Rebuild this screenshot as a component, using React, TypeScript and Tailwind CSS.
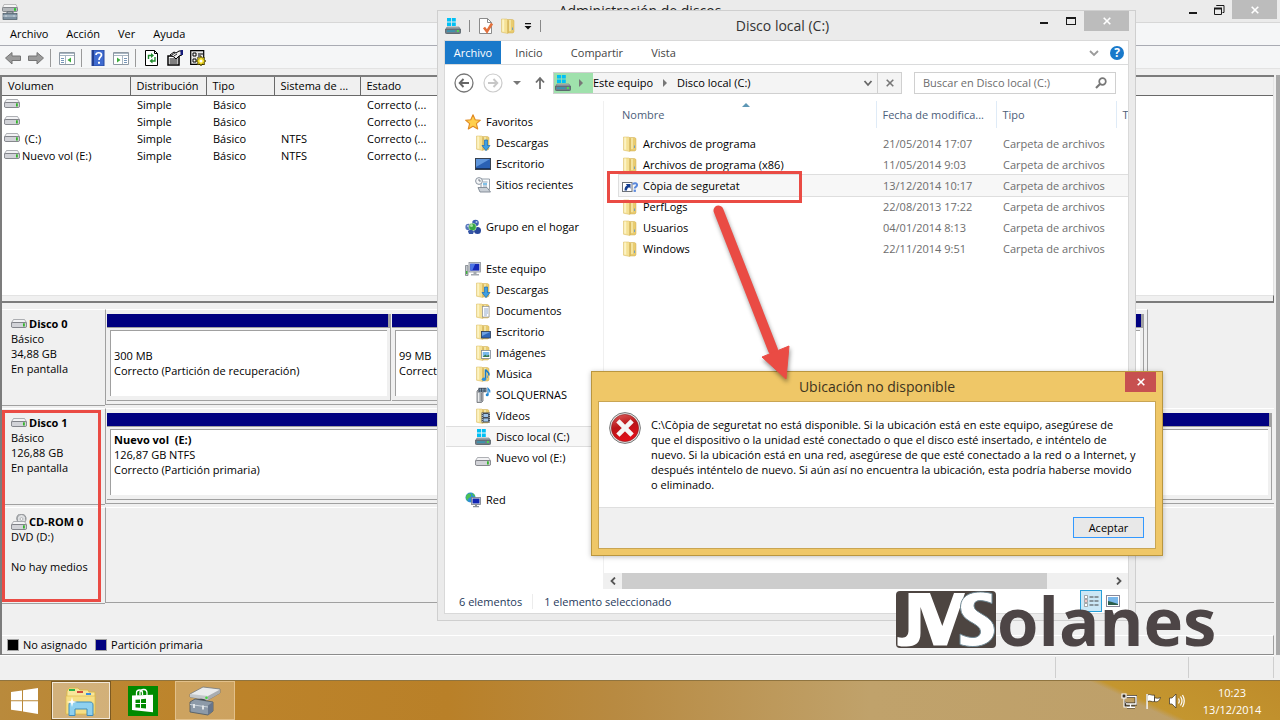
import { useState } from 'react';
import type { ReactNode } from 'react';

interface Volume {
  id: number;
  name: string;
  layout: string;
  type: string;
  fs: string;
  status: string;
}

interface NavEntry {
  label: string;
  icon: string;
  level: 0 | 1;
}

interface FileEntry {
  name: string;
  date: string;
  type: string;
  icon: string;
}

const volumes: Volume[] = [
  { id: 1, name: '', layout: 'Simple', type: 'Básico', fs: '', status: 'Correcto (...' },
  { id: 2, name: '', layout: 'Simple', type: 'Básico', fs: '', status: 'Correcto (...' },
  { id: 3, name: ' (C:)', layout: 'Simple', type: 'Básico', fs: 'NTFS', status: 'Correcto (...' },
  { id: 4, name: 'Nuevo vol (E:)', layout: 'Simple', type: 'Básico', fs: 'NTFS', status: 'Correcto (...' },
];

const navGroups: NavEntry[][] = [
  [
    { label: 'Favoritos', icon: 'star', level: 0 },
    { label: 'Descargas', icon: 'downloads', level: 1 },
    { label: 'Escritorio', icon: 'desktop', level: 1 },
    { label: 'Sitios recientes', icon: 'recent', level: 1 },
  ],
  [{ label: 'Grupo en el hogar', icon: 'homegroup', level: 0 }],
  [
    { label: 'Este equipo', icon: 'computer', level: 0 },
    { label: 'Descargas', icon: 'downloads', level: 1 },
    { label: 'Documentos', icon: 'documents', level: 1 },
    { label: 'Escritorio', icon: 'desktopFolder', level: 1 },
    { label: 'Imágenes', icon: 'pictures', level: 1 },
    { label: 'Música', icon: 'music', level: 1 },
    { label: 'SOLQUERNAS', icon: 'server', level: 1 },
    { label: 'Vídeos', icon: 'videos', level: 1 },
    { label: 'Disco local (C:)', icon: 'systemDrive', level: 1 },
    { label: 'Nuevo vol (E:)', icon: 'drive', level: 1 },
  ],
  [{ label: 'Red', icon: 'network', level: 0 }],
];

const files: FileEntry[] = [
  { name: 'Archivos de programa', date: '21/05/2014 17:07', type: 'Carpeta de archivos', icon: 'folder' },
  { name: 'Archivos de programa (x86)', date: '11/05/2014 9:03', type: 'Carpeta de archivos', icon: 'folder' },
  { name: 'Còpia de seguretat', date: '13/12/2014 10:17', type: 'Carpeta de archivos', icon: 'shortcut' },
  { name: 'PerfLogs', date: '22/08/2013 17:22', type: 'Carpeta de archivos', icon: 'folder' },
  { name: 'Usuarios', date: '04/01/2014 8:13', type: 'Carpeta de archivos', icon: 'folder' },
  { name: 'Windows', date: '22/11/2014 9:51', type: 'Carpeta de archivos', icon: 'folder' },
];

const folderShape = (
  <>
    <path d="M7 1.500h5.500l1.500 1V14l-1 1H7z" fill="#e9cc70" stroke="#d0ad50" strokeWidth="0.5" />
    <path d="M9 2h2v11H9z" fill="#f3e3a0" />
    <path d="M1.500 1h5l1.300 1V15.500l-6.300-1.300z" fill="#f5e195" stroke="#d8b95c" strokeWidth="0.5" />
    <path d="M2.200 1.600h2v12.200l-2-.4z" fill="#fcf3c4" />
    <path d="M8 2.500v12.500" stroke="#c4a246" strokeWidth="0.600" />
    <path d="M12.500 9.500v2.500" stroke="#6f9fc4" strokeWidth="1" />
  </>
);

const windowsFlag = <path d="M2 0h4v3.600H2zM6.800 0h4v3.600h-4zM2 4.400h4V8H2zM6.800 4.400h4V8h-4z" fill="#00c0f5" />;

const driveShape = (
  <>
    <path d="M2.500 5.500h11l2.200 3.500H.3z" fill="#f2f2f4" stroke="#8e9096" strokeWidth="0.7" />
    <rect x="0.400" y="8.500" width="15.200" height="5" rx="1.400" fill="#d2d3d8" stroke="#6c6e75" strokeWidth="0.8" />
    <rect x="12" y="9.300" width="1.800" height="3.200" fill="#35b32c" />
  </>
);

const iconArt: Record<string, ReactNode> = {
  folder: folderShape,
  downloads: (
    <>
      {folderShape}
      <path d="M9.500 5h3v5.500H15L11 15.700 7 10.500h2.500z" fill="#3d9fe2" stroke="#1b6cb5" strokeWidth="0.7" />
    </>
  ),
  documents: (
    <>
      {folderShape}
      <rect x="7.500" y="3.500" width="6.500" height="10.500" fill="#fff" stroke="#8a8f98" strokeWidth="0.700" />
      <path d="M9 6h4M9 8h4M9 10h4M9 12h3" stroke="#7693bb" strokeWidth="0.800" />
    </>
  ),
  desktopFolder: (
    <>
      {folderShape}
      <rect x="6.500" y="7.500" width="9" height="6.500" fill="#2f67b8" stroke="#2b3b55" strokeWidth="0.800" />
      <path d="M7 8h8L7 12z" fill="#6ea0e0" />
    </>
  ),
  pictures: (
    <>
      {folderShape}
      <rect x="6.500" y="5.500" width="9" height="8" fill="#fff" stroke="#7f8a96" strokeWidth="0.800" />
      <path d="M7.700 7h6.500v5H7.700z" fill="#78b9ec" />
      <path d="M7.700 12l2.500-2.500 1.500 1.300 2.500-1V12z" fill="#397b4f" />
    </>
  ),
  music: (
    <>
      {folderShape}
      <path d="M10.500 13V3.500c1 2 4 2 3.500 6" fill="none" stroke="#1779c9" strokeWidth="1.500" />
      <ellipse cx="9" cy="13.200" rx="2.200" ry="1.800" fill="#2a8fdd" />
    </>
  ),
  videos: (
    <>
      {folderShape}
      <rect x="6.500" y="4.500" width="8.500" height="10" fill="#424a55" />
      <path d="M8.500 6h4.500v3H8.500zM8.500 10.500h4.500v3H8.500z" fill="#9dc3e8" />
      <path d="M7.300 5v9.500M14.200 5v9.500" stroke="#e2e6ea" strokeWidth="0.800" strokeDasharray="1 1" />
    </>
  ),
  star: (
    <path d="M8 .8l2.200 4.900 5.200.5-4 3.500 1.300 5.300L8 12.200 3.300 15l1.300-5.300-4-3.500 5.200-.5z" fill="#ffcf4b" stroke="#e08a23" strokeWidth="1.100" strokeLinejoin="round" />
  ),
  desktop: (
    <>
      <rect x="0.500" y="2.500" width="15" height="11" fill="#2a61b4" stroke="#39424f" />
      <path d="M1 3h14L1 11z" fill="#5f96dc" />
      <path d="M1 12.500h14" stroke="#16335f" />
    </>
  ),
  recent: (
    <>
      <path d="M6 2h8.500v10.500H6z" fill="#fafcfe" stroke="#8b95a0" strokeWidth="0.900" />
      <path d="M3 10.500h9l3.500 4.500H5z" fill="#c9cfd6" stroke="#7d8792" strokeWidth="0.900" />
      <path d="M8 5h4.500M8 9h4" stroke="#8fa3b5" />
      <path d="M8 7h4" stroke="#3fa0dc" strokeWidth="1.300" />
      <circle cx="4" cy="4" r="3.400" fill="#f4f6f8" stroke="#8b95a0" />
      <path d="M4 2v2h1.800" fill="none" stroke="#5a636d" strokeWidth="0.800" />
    </>
  ),
  homegroup: (
    <>
      <circle cx="10.500" cy="4" r="3.300" fill="#3a5fb0" />
      <circle cx="3.600" cy="8" r="3.200" fill="#5877bd" />
      <circle cx="12.500" cy="11.500" r="3.500" fill="#28479b" />
      <circle cx="7.500" cy="8" r="3.800" fill="#37a844" stroke="#d2edc9" strokeWidth="0.600" />
      <circle cx="6.500" cy="6.600" r="1.500" fill="#a6e2a0" />
      <path d="M3 12.500c0-2 5-2 6 0l-1 2.500H4z" fill="#3656a6" />
      <circle cx="2.900" cy="7" r="1" fill="#bccaec" />
      <circle cx="11.500" cy="3" r="1" fill="#bccaec" />
    </>
  ),
  computer: (
    <>
      <path d="M.5 4.500h2.500v10H.5z" fill="#c3c7cc" stroke="#6e757d" strokeWidth="0.700" />
      <rect x="1" y="10" width="1.400" height="3" fill="#42b43c" />
      <rect x="4" y="1.500" width="11.500" height="9.500" fill="#d8dbe0" stroke="#8a9098" strokeWidth="0.800" />
      <rect x="5.300" y="2.800" width="9" height="6.800" fill="#1428b8" />
      <path d="M5.300 2.800h5l-3 6.800h-2z" fill="#4b74e6" />
      <path d="M8.500 11h3v2h2.500v1.500H6V13h2.500z" fill="#a4a9b0" />
    </>
  ),
  server: (
    <>
      <path d="M2 4l1.500-1.500H8V14l-1.500 1.500H2z" fill="#b9bcc0" stroke="#6c7075" strokeWidth="0.800" />
      <path d="M3.500 6v8.500" stroke="#eceeef" strokeWidth="1.200" />
      <path d="M6.300 6v8.500" stroke="#7f8489" strokeWidth="1.200" />
      <path d="M3.500.8h8v4.400h-8z" fill="#394350" />
      <path d="M4.500 2.200h1.700M7 2.200h1.700M9.500 2.200h1.200M4.500 4h1.700M7 4h1.700M9.500 4h1.200" stroke="#9cc4e0" />
      <path d="M13 7.500V1.500c1 1 2.300 1.500 1.800 4" fill="none" stroke="#1f86d2" strokeWidth="1.200" />
      <circle cx="12.200" cy="7.700" r="1.500" fill="#1f86d2" />
    </>
  ),
  systemDrive: (
    <>
      {windowsFlag}
      <path d="M2 9h12l1.500 2.500H.5z" fill="#aeb4ba" stroke="#6e757d" strokeWidth="0.600" />
      <rect x="0.400" y="11" width="15.200" height="4.500" rx="1" fill="#6f7f8b" stroke="#4f5960" strokeWidth="0.800" />
      <rect x="2" y="12.200" width="8" height="1.800" fill="#3d93ad" />
      <rect x="12" y="12" width="1.800" height="2" fill="#4be04a" />
    </>
  ),
  drive: <g transform="translate(0 2)">{driveShape}</g>,
  network: (
    <>
      <circle cx="5.500" cy="5.500" r="5" fill="#2c8fd4" />
      <path d="M2 2.500c3-2 5-.5 4 1.500s-4 2-3 5C1 8 .3 4.500 2 2.500zM7 1c2 .5 3 2 3.200 3.500L8 4z" fill="#4cc052" />
      <rect x="6.500" y="5.500" width="9" height="7" fill="#cfd4da" stroke="#757d87" strokeWidth="0.800" />
      <rect x="7.600" y="6.600" width="6.800" height="4.800" fill="#1226b4" />
      <path d="M10 12.500h2v1.500h2v1.300H8V14h2z" fill="#8a9199" />
    </>
  ),
  shortcut: (
    <>
      <rect x="0.500" y="4.500" width="9.500" height="9" fill="#fff" stroke="#6c7178" />
      <path d="M2.500 12.500c0-3 .8-4.300 2.500-5L3.800 6H8.500v4.700L7.200 9.300c-1.500.5-2.200 1.500-2.200 3.200z" fill="#153d8f" />
      <path d="M11 6.500c.5-2 4.500-1.800 4 .8-.3 1.700-2.300 1.500-2.300 3.200" fill="none" stroke="#5a88dc" strokeWidth="2" />
      <rect x="11.600" y="11.600" width="2.300" height="2.300" fill="#5a88dc" />
    </>
  ),
};

function Icon({ name }: { name: string }) {
  return (
    <svg className="h-4 w-4 shrink-0" viewBox="0 0 16 16" aria-hidden="true">
      {iconArt[name]}
    </svg>
  );
}

function DiskIcon() {
  return (
    <svg className="h-4 w-4 shrink-0" viewBox="0 0 16 16" aria-hidden="true">
      <g transform="translate(0 -2)">{driveShape}</g>
    </svg>
  );
}

function CloseGlyph() {
  return (
    <svg className="h-2 w-2" viewBox="0 0 8 8" aria-hidden="true">
      <path d="M.7.7l6.600 6.600M7.300.7L.7 7.300" stroke="currentColor" strokeWidth="1.600" />
    </svg>
  );
}

function Crumb() {
  return (
    <svg className="h-2 w-1" viewBox="0 0 4 8" aria-hidden="true">
      <path d="M0 0l4 4-4 4z" fill="#777" />
    </svg>
  );
}

function ToolbarButton({ label, children }: { label: string; children: ReactNode }) {
  return (
    <button aria-label={label} className="flex h-[18px] w-[18px] items-center justify-center">
      <svg className="h-4 w-4" viewBox="0 0 16 16" aria-hidden="true">
        {children}
      </svg>
    </button>
  );
}

interface PartitionProps {
  className: string;
  name?: string;
  size: string;
  status: string;
}

// the name line keeps its height even when the partition has no name
function Partition({ className, name = '', size, status }: PartitionProps) {
  return (
    <div className={`flex flex-col border-r border-b border-[#a0a0a0] ${className}`}>
      <div className="h-[14px] shrink-0 border-r-2 border-b border-[#a0a0a0] bg-[#000080]" />
      <div className="mx-[3px] mt-0.5 mb-1 flex-1 overflow-hidden border-t border-l border-[#a0a0a0] bg-white pt-0.5 pl-[3px] whitespace-nowrap">
        <p className="h-[15px] font-bold whitespace-pre">{name}</p>
        <p>{size}</p>
        <p>{status}</p>
      </div>
    </div>
  );
}

interface DiskRowProps {
  title: string;
  lines: string[];
  icon: ReactNode;
  areaClass?: string;
  children?: ReactNode;
}

function DiskRow({ title, lines, icon, areaClass = '', children }: DiskRowProps) {
  return (
    <div className="flex h-[99px]">
      <div className="mb-0.5 w-[103px] shrink-0 border-t border-b border-t-white border-b-[#a0a0a0] pt-1.5 pl-[9px]">
        <div className="flex h-[15px] items-center gap-0.5">
          {icon}
          <span className="font-bold whitespace-nowrap">{title}</span>
        </div>
        {lines.map((line, i) => (
          <div key={i} className="h-[15px] whitespace-nowrap">{line}</div>
        ))}
      </div>
      <div className={`mb-[3px] flex min-w-0 flex-1 border-t border-b border-l border-t-white border-b-[#a0a0a0] border-l-[#a0a0a0] pt-1 pb-[3px] pl-px ${areaClass}`}>
        {children}
      </div>
    </div>
  );
}

function DiskManager() {
  return (
    <section className="flex flex-1 flex-col bg-[#f0f0f0]">
      <header className="relative flex h-[23px] shrink-0 items-start justify-between overflow-hidden border-b border-[#d7d7d7] bg-[#ebebeb]">
        <svg className="mt-1 ml-0.5 h-4 w-4" viewBox="0 0 16 16" aria-hidden="true">
          <path d="M2 .5h12l1.500 3.500H.5z" fill="#f5f5f5" stroke="#999" strokeWidth="0.600" />
          <rect x="0.500" y="3.500" width="15" height="4" rx="1" fill="#b3b7ba" stroke="#666b70" strokeWidth="0.700" />
          <rect x="12" y="4.200" width="2" height="2.500" fill="#27c92d" />
          <path d="M5 9.500V8h6v1.500" fill="none" stroke="#52616d" />
          <rect x="1" y="9.500" width="14" height="6" fill="#7d91a1" stroke="#485662" strokeWidth="0.700" />
          <path d="M1 12h14M4 11v2M12 11v2" stroke="#d4dee6" strokeWidth="0.800" />
        </svg>
        <h1 className="absolute top-0 left-1/2 -translate-x-1/2 text-[14px] leading-[22px] whitespace-nowrap text-[#222]">Administración de discos</h1>
        <div className="flex text-[#1a1a1a]">
          <button aria-label="Minimizar" className="flex h-[19px] w-[26px] items-center justify-center pt-1.5">
            <span className="h-0.5 w-2 bg-current" />
          </button>
          <button aria-label="Restaurar" className="flex h-[19px] w-[26px] items-center justify-center">
            <svg className="h-3 w-3" viewBox="0 0 12 12" aria-hidden="true">
              <path d="M3.500 2V1.500h7.500v7H9.500M1.500 4.500h7v6h-7z" fill="none" stroke="currentColor" />
              <path d="M1 4.500h8" stroke="currentColor" strokeWidth="2" />
            </svg>
          </button>
          <button aria-label="Cerrar" className="mr-[3px] flex h-[19px] w-[45px] items-center justify-center bg-[#bcbcbc] text-white">
            <CloseGlyph />
          </button>
        </div>
      </header>

      <nav className="flex h-[23px] shrink-0 items-center gap-[18px] border-b border-[#a9abb3] bg-[#f5f6f7] pb-0.5 pl-2.5">
        <button>Archivo</button>
        <button>Acción</button>
        <button>Ver</button>
        <button>Ayuda</button>
      </nav>

      <div className="flex h-[23px] shrink-0 items-center gap-[5px] border-b border-[#e3e3e3] bg-[#f5f6f7] pt-px pl-1">
        <ToolbarButton label="Atrás">
          <path d="M.5 8L7 2.500V6h8.500v4.500H7V14z" fill="#9b9b9b" stroke="#757575" />
        </ToolbarButton>
        <ToolbarButton label="Adelante">
          <path d="M15.500 8L9 2.500V6H.5v4.500H9V14z" fill="#9b9b9b" stroke="#757575" />
        </ToolbarButton>
        <span className="mr-0.5 h-[18px] w-px bg-[#9a9a9a]" />
        <ToolbarButton label="Mostrar árbol">
          <path d="M.5 2.500h15v12H.5z" fill="#fff" stroke="#8f99a3" />
          <path d="M1 3.500h14M1 5.500h14M6.500 6v8" stroke="#a8b6c3" />
          <path d="M2 8.500h3M2 10.500h3M2 12.500h3" stroke="#7796b8" />
          <path d="M12 7.500v5L8.500 10z" fill="#3bab3a" />
        </ToolbarButton>
        <span className="mr-0.5 h-[18px] w-px bg-[#9a9a9a]" />
        <ToolbarButton label="Ayuda">
          <path d="M2 0h12v16H2z" fill="#3f6bd0" stroke="#2748a0" />
          <path d="M2 0h2v16H2z" fill="#223f91" />
          <path d="M6 5c0-3 5.500-3 5.500 0C11.500 7 9 7 9 10" fill="none" stroke="#fff" strokeWidth="1.700" />
          <path d="M8 11.700h2v2H8z" fill="#fff" />
        </ToolbarButton>
        <ToolbarButton label="Panel de acciones">
          <path d="M.5 2.500h15v12H.5z" fill="#fff" stroke="#8f99a3" />
          <path d="M1 3.500h14M1 5.500h14M9.500 6v8" stroke="#a8b6c3" />
          <path d="M11 8.500h3M11 10.500h3M11 12.500h3" stroke="#7796b8" />
          <path d="M4 7.500v5L7.500 10z" fill="#3bab3a" />
        </ToolbarButton>
        <span className="mr-0.5 h-[18px] w-px bg-[#9a9a9a]" />
        <ToolbarButton label="Actualizar">
          <path d="M1.500.5h9l3 3v12h-12z" fill="#fff" stroke="#000" />
          <path d="M10.500.5v3h3" fill="none" stroke="#000" />
          <path d="M4.500 9V5.500H8M11 7v4H7.500" fill="none" stroke="#1f8b2d" strokeWidth="1.400" />
          <path d="M7 3l3 2.500L7 8zM8.500 8.500L5.500 11l3 2.500z" fill="#1f8b2d" />
        </ToolbarButton>
        <ToolbarButton label="Propiedades">
          <path d="M1 6h11v9H1z" fill="#fff" stroke="#000" strokeWidth="1.500" />
          <path d="M2.500 9h8M2.500 11h8M2.500 13h8" stroke="#000" />
          <path d="M3 5l4-3 2 1 3-2h3v4l-3 1-3 3-2-2z" fill="#eee" stroke="#000" />
          <path d="M5 5l3-2M7 6l3-2" stroke="#000" strokeWidth="0.800" />
          <path d="M13.500 0H16v5h-2.500z" fill="#161d7c" />
        </ToolbarButton>
        <ToolbarButton label="Configuración">
          <path d="M.7.7h13v13.600H.7z" fill="#e7e7e7" stroke="#000" strokeWidth="1.200" />
          <path d="M3 3h3v3H3zM3 9h3v3H3z" fill="#fff" stroke="#000" />
          <path d="M8 4h5M8 6h3" stroke="#000" />
          <path d="M11 6l1 2 2.500-.5-.5 2.500 2 1-2 1 .5 2.500L12 14l-1 2-1-2-2.500.5L8 12l-2-1 2-1-.5-2.500L10 8z" fill="#f3dc25" stroke="#4b4300" strokeWidth="0.800" />
          <circle cx="11" cy="11" r="1.500" fill="#fff" />
        </ToolbarButton>
      </div>

      <div className="mt-1.5 flex flex-1 border-r-4 border-[#a9a9a9]">
        <div className="mr-0.5 flex min-w-0 flex-1 flex-col border-t-2 border-l-2 border-[#7c7c7c]">
          <div className="h-[218px] shrink-0 overflow-hidden border-r border-[#e3e3e3] bg-white">
            <table className="w-full table-fixed border-collapse text-left">
              <colgroup>
                <col className="w-[128px]" />
                <col className="w-[76px]" />
                <col className="w-[68px]" />
                <col className="w-[86px]" />
                <col />
              </colgroup>
              <thead>
                <tr className="h-[18px] border-b border-[#696969] bg-[#f0f0f0]">
                  <th className="border-r border-[#696969] p-0 pl-1.5 font-normal">Volumen</th>
                  <th className="border-r border-[#696969] p-0 pl-1.5 font-normal">Distribución</th>
                  <th className="border-r border-[#696969] p-0 pl-1.5 font-normal">Tipo</th>
                  <th className="border-r border-[#696969] p-0 pl-1.5 font-normal">Sistema de ...</th>
                  <th className="p-0 pl-1.5 font-normal">Estado</th>
                </tr>
              </thead>
              <tbody>
                {volumes.map((volume) => (
                  <tr key={volume.id} className="h-[17px]">
                    <td className="p-0 pl-0.5">
                      <span className="flex h-[17px] items-center gap-0.5 whitespace-pre">
                        <DiskIcon />
                        {volume.name}
                      </span>
                    </td>
                    <td className="p-0 pl-[7px]">{volume.layout}</td>
                    <td className="p-0 pl-[7px]">{volume.type}</td>
                    <td className="p-0 pl-[7px]">{volume.fs}</td>
                    <td className="p-0 pl-[7px]">{volume.status}</td>
                  </tr>
                ))}
              </tbody>
            </table>
          </div>
          <div className="h-2 shrink-0 border-t border-r border-b-2 border-t-[#e3e3e3] border-r-[#696969] border-b-[#7c7c7c]" />

          <div className="min-h-[326px] flex-1 pt-1.5">
            <DiskRow
              title="Disco 0"
              lines={['Básico', '34,88 GB', 'En pantalla']}
              icon={<DiskIcon />}
              areaClass="mr-[126px] border-r border-r-[#a0a0a0]"
            >
              <Partition className="w-[284px] shrink-0" size="300 MB" status="Correcto (Partición de recuperación)" />
              <Partition className="mr-[3px] ml-px flex-1" size="99 MB" status="Correcto (Sistema)" />
            </DiskRow>
            <DiskRow title="Disco 1" lines={['Básico', '126,88 GB', 'En pantalla']} icon={<DiskIcon />}>
              <Partition
                className="mr-0.5 flex-1"
                name="Nuevo vol  (E:)"
                size="126,87 GB NTFS"
                status="Correcto (Partición primaria)"
              />
            </DiskRow>
            <DiskRow
              title="CD-ROM 0"
              lines={['DVD (D:)', '', 'No hay medios']}
              icon={
                <svg className="h-4 w-4 shrink-0" viewBox="0 0 16 16" aria-hidden="true">
                  <circle cx="10.500" cy="5" r="4.500" fill="#dfe1e3" stroke="#8c8f93" />
                  <circle cx="10.500" cy="5" r="1.400" fill="#fff" stroke="#9b9ea2" strokeWidth="0.700" />
                  <g transform="translate(0 2)">{driveShape}</g>
                  <path d="M6.500 6.500a4.500 4.500 0 1 1 8-1" fill="none" stroke="#8c8f93" strokeWidth="0.800" />
                </svg>
              }
            />
          </div>

          <div className="flex h-5 shrink-0 items-center border-t border-r border-b border-t-white border-r-[#a0a0a0] border-b-[#8c8c8c] pb-px pl-[5px]">
            <span className="mr-1 h-3 w-3 border border-[#a0a0a0] bg-black" />
            No asignado
            <span className="mr-1 ml-2 h-3 w-3 border border-[#a0a0a0] bg-[#000080]" />
            Partición primaria
          </div>
        </div>
      </div>
      <footer className="mr-1.5 flex h-[25px] shrink-0 justify-end border-t border-white pt-px">
        <span className="mb-0.5 w-[133px] border-l border-[#cfcfcf]" />
        <span className="mb-0.5 w-[86px] border-x border-[#cfcfcf]" />
      </footer>
    </section>
  );
}

function Explorer() {
  const [selectedNav, setSelectedNav] = useState('Disco local (C:)');
  const [selectedFile, setSelectedFile] = useState('Còpia de seguretat');

  return (
    <section className="absolute top-2.5 left-[437px] flex h-[611px] w-[699px] flex-col border border-[#cfcfcf] bg-[#ebebeb] px-1.5 pb-1.5">
      <header className="relative flex h-[29px] shrink-0 items-start justify-between">
        <div className="flex h-[29px] items-center gap-2 pl-px">
          <Icon name="systemDrive" />
          <span className="h-3 w-px bg-[#888]" />
          <svg className="h-4 w-4" viewBox="0 0 16 16" aria-hidden="true">
            <path d="M1.500.5h8l4 4v11h-12z" fill="#fff" stroke="#8b8b8b" />
            <path d="M9.500.5v4h4" fill="none" stroke="#8b8b8b" />
            <path d="M6 9.500l3 4 5-8" fill="none" stroke="#e2703c" strokeWidth="2.600" />
          </svg>
          <span className="-ml-0.5 flex"><Icon name="folder" /></span>
          <svg className="h-2 w-2" viewBox="0 0 8 8" aria-hidden="true">
            <path d="M1 1h6v1.200H1zM.5 4h7L4 7.500z" fill="#111" />
          </svg>
          <span className="h-3 w-px bg-[#888]" />
        </div>
        <h2 className="absolute inset-x-0 top-0 pr-2 text-center text-[14px] leading-[29px] whitespace-nowrap text-[#333]">Disco local (C:)</h2>
        <div className="relative flex text-[#1a1a1a]">
          <button aria-label="Minimizar" className="flex h-5 w-[27px] items-center justify-center pt-1">
            <span className="h-0.5 w-2 bg-current" />
          </button>
          <button aria-label="Maximizar" className="flex h-5 w-[27px] items-center justify-center">
            <span className="h-2 w-2.5 border border-t-2 border-current" />
          </button>
          <button aria-label="Cerrar" className="flex h-5 w-[45px] items-center justify-center bg-[#bcbcbc] text-white">
            <CloseGlyph />
          </button>
        </div>
      </header>

      <div className="flex min-h-0 flex-1 flex-col border border-[#d9d9d9] bg-white">
        <div className="flex h-6 shrink-0 items-center border-b border-[#dadbdc] text-[#444]">
          <button className="h-[23px] w-14 bg-[#1979ca] text-white">Archivo</button>
          <button className="w-14">Inicio</button>
          <button className="w-20">Compartir</button>
          <button className="w-[53px]">Vista</button>
          <svg className="mr-[11px] ml-auto h-2 w-2.5" viewBox="0 0 10 8" aria-hidden="true">
            <path d="M1 2l4 4 4-4" fill="none" stroke="#9b9b9b" strokeWidth="1.800" />
          </svg>
          <button aria-label="Ayuda" className="mr-1 h-3.5 w-3.5 rounded-full bg-[#1979ca] text-[12px] leading-[14px] font-bold text-white">?</button>
        </div>

        <div className="flex h-9 shrink-0 items-center pb-px pl-[9px]">
          <button aria-label="Atrás">
            <svg className="h-5 w-5" viewBox="0 0 20 20" aria-hidden="true">
              <circle cx="10" cy="10" r="9" fill="#fff" stroke="#777" strokeWidth="1.300" />
              <path d="M15 10H6.500M9.500 6L5.700 10l3.800 4" fill="none" stroke="#666" strokeWidth="1.900" />
            </svg>
          </button>
          <button aria-label="Adelante" className="ml-[9px]">
            <svg className="h-5 w-5" viewBox="0 0 20 20" aria-hidden="true">
              <circle cx="10" cy="10" r="9" fill="#fff" stroke="#cbcbcb" strokeWidth="1.200" />
              <path d="M5 10h8.500M10.500 6l3.800 4-3.800 4" fill="none" stroke="#c7c7c7" strokeWidth="1.900" />
            </svg>
          </button>
          <button aria-label="Ubicaciones recientes" className="ml-2.5">
            <svg className="h-2 w-2" viewBox="0 0 8 8" aria-hidden="true">
              <path d="M0 2h8L4 6z" fill="#777" />
            </svg>
          </button>
          <button aria-label="Subir" className="ml-[11px]">
            <svg className="h-4 w-4" viewBox="0 0 16 16" aria-hidden="true">
              <path d="M8 14V3.500M4 7.500l4-4.500 4 4.500" fill="none" stroke="#6d6d6d" strokeWidth="1.800" />
            </svg>
          </button>
          <div className="ml-[5px] flex h-[22px] w-[349px] items-center border border-[#d0d0d0] bg-[#f4f4f4]">
            <span className="flex h-full w-[39px] items-center gap-2 bg-[#9fe1ac] pl-px">
              <Icon name="systemDrive" />
              <Crumb />
            </span>
            <button>Este equipo</button>
            <span className="px-2.5"><Crumb /></span>
            <button>Disco local (C:)</button>
            <svg className="mr-1 ml-auto h-2 w-2.5" viewBox="0 0 10 8" aria-hidden="true">
              <path d="M1.500 2l3.500 4 3.500-4" fill="none" stroke="#666" strokeWidth="1.800" />
            </svg>
            <button aria-label="Detener" className="flex h-full w-6 items-center justify-center border-l border-[#d0d0d0] text-[#777]">
              <CloseGlyph />
            </button>
          </div>
          <label className="ml-3 flex h-[22px] w-[202px] items-center border border-[#d0d0d0] pr-2 pl-2">
            <input aria-label="Buscar" placeholder="Buscar en Disco local (C:)" className="min-w-0 flex-1 outline-none placeholder:text-[#6d6d6d]" />
            <svg className="h-3 w-3" viewBox="0 0 12 12" aria-hidden="true">
              <circle cx="7.500" cy="4.500" r="3.300" fill="none" stroke="#777" strokeWidth="1.700" />
              <path d="M5 7L1 11" stroke="#777" strokeWidth="2.200" />
            </svg>
          </label>
        </div>

        <div className="flex min-h-0 flex-1">
          <nav className="flex w-[159px] shrink-0 flex-col gap-[21px] border-r border-[#f0f0f0] pt-2.5 pl-px">
            {navGroups.map((group) => (
              <ul key={group[0].label}>
                {group.map((entry) => (
                  <li key={entry.label}>
                    <button
                      onClick={() => setSelectedNav(entry.label)}
                      className={`flex h-[21px] w-full items-center gap-[5px] border-y whitespace-nowrap ${
                        entry.level === 0 ? 'pl-[19px]' : 'pl-[29px]'
                      } ${entry.label === selectedNav ? 'border-[#dedede] bg-[#f7f7f7]' : 'border-transparent'}`}
                    >
                      <Icon name={entry.icon} />
                      {entry.label}
                    </button>
                  </li>
                ))}
              </ul>
            ))}
          </nav>

          <div className="flex min-w-0 flex-1 flex-col">
            <div className="relative flex-1 overflow-hidden pl-[15px]">
              <svg className="absolute top-0.5 left-[138px] h-1 w-2" viewBox="0 0 8 4" aria-hidden="true">
                <path d="M4 0l4 4H0z" fill="#5d97b5" />
              </svg>
              <table className="w-full table-fixed border-collapse text-left whitespace-nowrap">
                <colgroup>
                  <col className="w-[257px]" />
                  <col className="w-[120px]" />
                  <col className="w-[120px]" />
                  <col />
                </colgroup>
                <thead>
                  <tr className="h-[27px] text-[#4c607a]">
                    <th className="border-r border-[#dfebf7] p-0 pl-[3px] font-normal">Nombre</th>
                    <th className="border-r border-[#dfebf7] p-0 pl-1.5 font-normal">Fecha de modifica...</th>
                    <th className="border-r border-[#dfebf7] p-0 pl-1.5 font-normal">Tipo</th>
                    <th className="p-0 pl-1.5 font-normal">T</th>
                  </tr>
                </thead>
                <tbody>
                  <tr className="h-[5px]" />
                  {files.map((file) => (
                    <tr
                      key={file.name}
                      onClick={() => setSelectedFile(file.name)}
                      className={file.name === selectedFile ? 'h-[21px] bg-[#f7f7f7] outline outline-[#dedede]' : 'h-[21px]'}
                    >
                      <td className="p-0 pl-[3px]">
                        <span className="flex items-center gap-[5px]">
                          <Icon name={file.icon} />
                          {file.name}
                        </span>
                      </td>
                      <td className="p-0 pl-[7px] text-[#6d6d6d]">{file.date}</td>
                      <td className="p-0 pl-[7px] text-[#6d6d6d]">{file.type}</td>
                      <td />
                    </tr>
                  ))}
                </tbody>
              </table>
            </div>
            <div className="flex h-4 shrink-0 items-center bg-[#f0f0f0] text-[#555]">
              <svg className="mx-1.5 h-2 w-1.5" viewBox="0 0 6 8" aria-hidden="true">
                <path d="M5 .5L1.500 4 5 7.500" fill="none" stroke="currentColor" strokeWidth="1.800" />
              </svg>
              <span className="mr-[63px] h-4 flex-1 bg-[#cdcdcd]" />
              <svg className="mx-1.5 h-2 w-1.5" viewBox="0 0 6 8" aria-hidden="true">
                <path d="M1 .5L4.500 4 1 7.500" fill="none" stroke="currentColor" strokeWidth="1.800" />
              </svg>
            </div>
          </div>
        </div>

        <footer className="flex h-6 shrink-0 items-center pl-3.5 text-[#1e395b]">
          <span className="border-r border-[#ececec] pr-2.5">6 elementos</span>
          <span className="pl-[11px]">1 elemento seleccionado</span>
          <button aria-label="Detalles" className="ml-auto flex h-[22px] w-[22px] items-center justify-center border border-[#26a0da] bg-[#cbe8f6]">
            <svg className="h-4 w-4" viewBox="0 0 16 16" aria-hidden="true">
              <path d="M1.500 2.500h3v3h-3zM1.500 6.500h3v3h-3zM1.500 10.500h3v3h-3z" fill="#fff" stroke="#888" strokeWidth="0.700" />
              <path d="M6.500 4h4M11.500 4h4M6.500 8h4M11.500 8h4M6.500 12h4M11.500 12h4" stroke="#444" />
              <path d="M2.500 7.500h1v1h-1z" fill="#d02020" />
            </svg>
          </button>
          <button aria-label="Vistas en miniatura" className="mr-1 flex h-[22px] w-[22px] items-center justify-center">
            <svg className="h-3 w-3.5" viewBox="0 0 14 12" aria-hidden="true">
              <rect x="0.500" y="0.500" width="13" height="11" fill="#fff" stroke="#889" />
              <rect x="2" y="2" width="10" height="8" fill="#79b7ea" />
              <path d="M2 10V6l4 1 6 2v1z" fill="#2a5d4a" />
            </svg>
          </button>
        </footer>
      </div>
    </section>
  );
}

function ErrorDialog({ onClose }: { onClose: () => void }) {
  return (
    <section
      role="alertdialog"
      aria-labelledby="dialog-title"
      className="absolute top-[371px] left-[591px] flex w-[572px] flex-col border border-[#b9963f] bg-[#efc767] px-1.5 pb-1.5 shadow-[0_1px_5px_rgba(0,0,0,0.25)]"
    >
      <header className="flex h-[29px] items-start">
        <h2 id="dialog-title" className="flex-1 pl-[31px] text-center text-[14px] leading-[29px] text-[#3c3320]">Ubicación no disponible</h2>
        <button aria-label="Cerrar" onClick={onClose} className="flex h-5 w-[31px] items-center justify-center bg-[#c75050] text-white">
          <CloseGlyph />
        </button>
      </header>
      <div className="border border-[#c9a553] bg-white">
        <div className="flex h-[105px] gap-2.5 pt-2.5 pl-2.5">
          <svg className="h-8 w-8 shrink-0" viewBox="0 0 32 32" aria-hidden="true">
            <defs>
              <linearGradient id="errorRed" x1="0" y1="0" x2="0.300" y2="1">
                <stop offset="0" stopColor="#e0605f" />
                <stop offset="0.500" stopColor="#b91518" />
                <stop offset="1" stopColor="#e0101a" />
              </linearGradient>
            </defs>
            <circle cx="16" cy="16" r="15.400" fill="#e6e6e6" stroke="#777" />
            <circle cx="16" cy="16" r="13.600" fill="url(#errorRed)" stroke="#8b1b1b" strokeWidth="0.600" />
            <path d="M10.500 10.500l11 11M21.500 10.500l-11 11" stroke="#f6f6f6" strokeWidth="4.600" strokeLinecap="square" />
          </svg>
          <p className="w-[500px] pt-[5px]">
            C:\Còpia de seguretat no está disponible. Si la ubicación está en este equipo, asegúrese de
            <br />
            que el dispositivo o la unidad esté conectado o que el disco esté insertado, e inténtelo de
            <br />
            nuevo. Si la ubicación está en una red, asegúrese de que esté conectado a la red o a Internet, y
            <br />
            después inténtelo de nuevo. Si aún así no encuentra la ubicación, esta podría haberse movido
            <br />
            o eliminado.
          </p>
        </div>
        <div className="flex h-[41px] items-center justify-end border-t border-[#dfdfdf] bg-[#f0f0f0] pr-[11px] pb-0.5">
          <button onClick={onClose} className="h-[21px] w-[71px] border border-[#3399ff] bg-[#e8e8e8]">Aceptar</button>
        </div>
      </div>
    </section>
  );
}

function Logo() {
  return (
    <div className="pointer-events-none absolute top-[591px] left-[896px] flex items-start text-[#4d4546]">
      <svg className="h-[58px] w-[101px]" viewBox="0 0 101 58" aria-hidden="true">
        <rect x="0" y="0" width="100" height="57" rx="4" fill="#4d4541" />
        <path d="M12.500 2H34l12.300 33L58 2h11L51 54.500H37.500L24.500 16v26c0 10-5 13.500-14 13.500-4 0-7 0-9-1v-8.500c7 2 11 0 11-7z" fill="#fff" />
        <path
          d="M96 2.500v10c-10-4-18-4.500-18 2.500 0 8 20.500 9 20.500 24 0 14-17 20-34.500 14.500V43c10 5 20.500 5 20.500-2.500 0-9-20-9-20-24C64.500 2 80-1.500 96 2.500z"
          fill="#fff"
          stroke="#6d8793"
          strokeWidth="1"
        />
      </svg>
      <span className="text-[67px] leading-[58px] font-bold">olanes</span>
    </div>
  );
}

function Annotations() {
  return (
    <>
      <div className="pointer-events-none absolute top-[171px] left-[607px] h-8 w-[195px] border-3 border-[#ea4b44]" />
      <div className="pointer-events-none absolute top-[410px] left-0.5 h-48 w-[99px] border-3 border-[#ea4b44]" />
      <svg className="pointer-events-none absolute top-[200px] left-[705px] h-[185px] w-[95px] drop-shadow-[1px_3px_2px_rgba(0,0,0,0.4)]" viewBox="0 0 95 185" aria-hidden="true">
        <path d="M13.500 10.500L68 150" stroke="#ea4b44" strokeWidth="10" strokeLinecap="round" />
        <path d="M81 179L57 157l27-11z" fill="#ea4b44" stroke="#ea4b44" strokeLinejoin="round" />
      </svg>
    </>
  );
}

function Taskbar() {
  return (
    <footer className="flex h-10 shrink-0 items-stretch border-t border-[#8f7440] bg-[linear-gradient(25deg,transparent_86%,#c4962f_87%,#be8c2b_100%),linear-gradient(90deg,#b98a3c_0%,#bd842b_14%,#b98028_35%,#b88a41_48%,#c0a26b_68%,#bd9f69_100%)] text-white">
      <button aria-label="Inicio" className="flex w-[51px] items-center justify-center pr-0.5">
        <svg className="h-[26px] w-[27px]" viewBox="0 0 27 26" aria-hidden="true">
          <path d="M0 4l11-1.600V12.300H0zM12 2.300L27 0v12.300H12zM0 13.300h11v9.900L0 21.700zM12 13.300h15V26l-15-2.400z" fill="#fff" />
        </svg>
      </button>
      <button aria-label="Explorador de archivos" className="flex w-[60px] items-center justify-center border border-[#7c5a22] bg-white/35 inset-ring inset-ring-white/70">
        <svg className="h-[30px] w-8" viewBox="0 0 32 30" aria-hidden="true">
          <path d="M2 5l2-3h9l2 2h8l1 2h6v22H1z" fill="#f8e69a" stroke="#d9b74e" />
          <path d="M4 3h6v2H4z" fill="#2db34a" />
          <path d="M12 5h6v2h-6z" fill="#cf4a3d" />
          <path d="M21 7h5v2h-5z" fill="#3b8ede" />
          <path d="M1 10h29v18H1z" fill="#f6df85" stroke="#deb94e" strokeWidth="0.700" />
          <path d="M4 29.500V19c0-2 1-3 3-3h18c2 0 3 1 3 3v10.500h-6V23H10v6.500z" fill="#8ed0ef" stroke="#3f8dbb" />
          <path d="M7 11l1 4 4 1-4 1-1 4-1-4-4-1 4-1z" fill="#fff" />
        </svg>
      </button>
      <button aria-label="Tienda" className="flex w-[64px] items-center justify-center">
        <svg className="h-[30px] w-[30px]" viewBox="0 0 30 30" aria-hidden="true">
          <rect width="30" height="30" fill="#008a00" />
          <path d="M4 9.500l21-.8v17.500L4 24z" fill="#fff" />
          <path d="M8.500 10V7c0-4 6-4 6 0v2M12 9V6c1-3.500 7-3.500 7 1v2" fill="none" stroke="#fff" strokeWidth="1.300" />
          <path d="M7.500 13.800l4.500-.4V17H7.500zM13 13.200l5-.5V17h-5zM7.500 18H12v3.800l-4.500-.4zM13 18h5v4.500l-5-.6z" fill="#008a00" />
        </svg>
      </button>
      <button aria-label="Administración de discos" className="flex w-[60px] items-center justify-center border border-[#e2c08a] bg-white/25">
        <svg className="h-[30px] w-8" viewBox="0 0 32 30" aria-hidden="true">
          <path d="M1 8L14 1l17 2v4L19 14 1 11z" fill="#e9ebec" stroke="#72777b" strokeWidth="0.800" />
          <path d="M19 10L31 3.500V7L19 14z" fill="#a9adb0" />
          <path d="M1 8l18 2v4L1 11z" fill="#c3c7ca" />
          <circle cx="17.500" cy="11.800" r="1.300" fill="#42d83c" />
          <path d="M8 16c1-4 9-3 9 1" fill="none" stroke="#3e464c" strokeWidth="1.500" />
          <path d="M1 16l5-3 18 3v9l-5 4L1 26z" fill="#8d9aa8" stroke="#4a5560" strokeWidth="0.800" />
          <path d="M19 19.500l5-3.500v9l-5 4z" fill="#67758a" />
          <path d="M1 18.500l18 2.500" stroke="#cbd4dc" />
          <path d="M5 18v4M14 19.500v4" stroke="#e7ebee" strokeWidth="1.800" />
        </svg>
      </button>

      <div className="ml-auto flex items-center gap-2">
        <svg className="h-4 w-4" viewBox="0 0 16 16" aria-hidden="true">
          <path d="M5.500 3.500h9.500v7.500H4.500V9M9.500 11v3M6 14.200h8" fill="none" stroke="#3a3022" strokeWidth="2.800" />
          <path d="M5.500 3.500h9.500v7.500H4.500V9M9.500 11v3M6 14.200h8" fill="none" stroke="#fff" strokeWidth="1.400" />
          <path d="M1 1h4v4H1zM3 5v9h3" fill="#3a3022" stroke="#fff" strokeWidth="1.100" />
        </svg>
        <svg className="h-4 w-4" viewBox="0 0 16 16" aria-hidden="true">
          <path d="M1.500 1v15M2.500 2c3-1.500 4 1 7 0v6.500c-3 1-4-1.500-7 0zM9.500 4.500c2 1 4 1 6 0-1 3-2.500 5-6 4z" fill="#fff" stroke="#3a3022" strokeWidth="0.700" />
          <path d="M2 1v15" stroke="#fff" strokeWidth="1.500" />
        </svg>
        <svg className="h-4 w-4" viewBox="0 0 16 16" aria-hidden="true">
          <path d="M.5 5H3l4-4v14l-4-4H.5z" fill="#fff" stroke="#3a3022" strokeWidth="0.700" />
          <path d="M9.500 5.500q1.500 2.500 0 5M11.500 3.500q3 4.500 0 9M13.500 2q3.500 6 0 12" fill="none" stroke="#fff" strokeWidth="1.200" />
        </svg>
        <div className="mr-[15px] ml-1.5 w-[66px] text-center leading-[17px]">
          <div>10:23</div>
          <div>13/12/2014</div>
        </div>
      </div>
    </footer>
  );
}

export default function App() {
  const [dialogOpen, setDialogOpen] = useState(true);

  return (
    <main className="relative flex min-h-screen flex-col overflow-hidden font-['Open_Sans',sans-serif] text-[11px] leading-[15px] text-black">
      <DiskManager />
      <Taskbar />
      <Explorer />
      {dialogOpen && <ErrorDialog onClose={() => setDialogOpen(false)} />}
      <Logo />
      <Annotations />
    </main>
  );
}
